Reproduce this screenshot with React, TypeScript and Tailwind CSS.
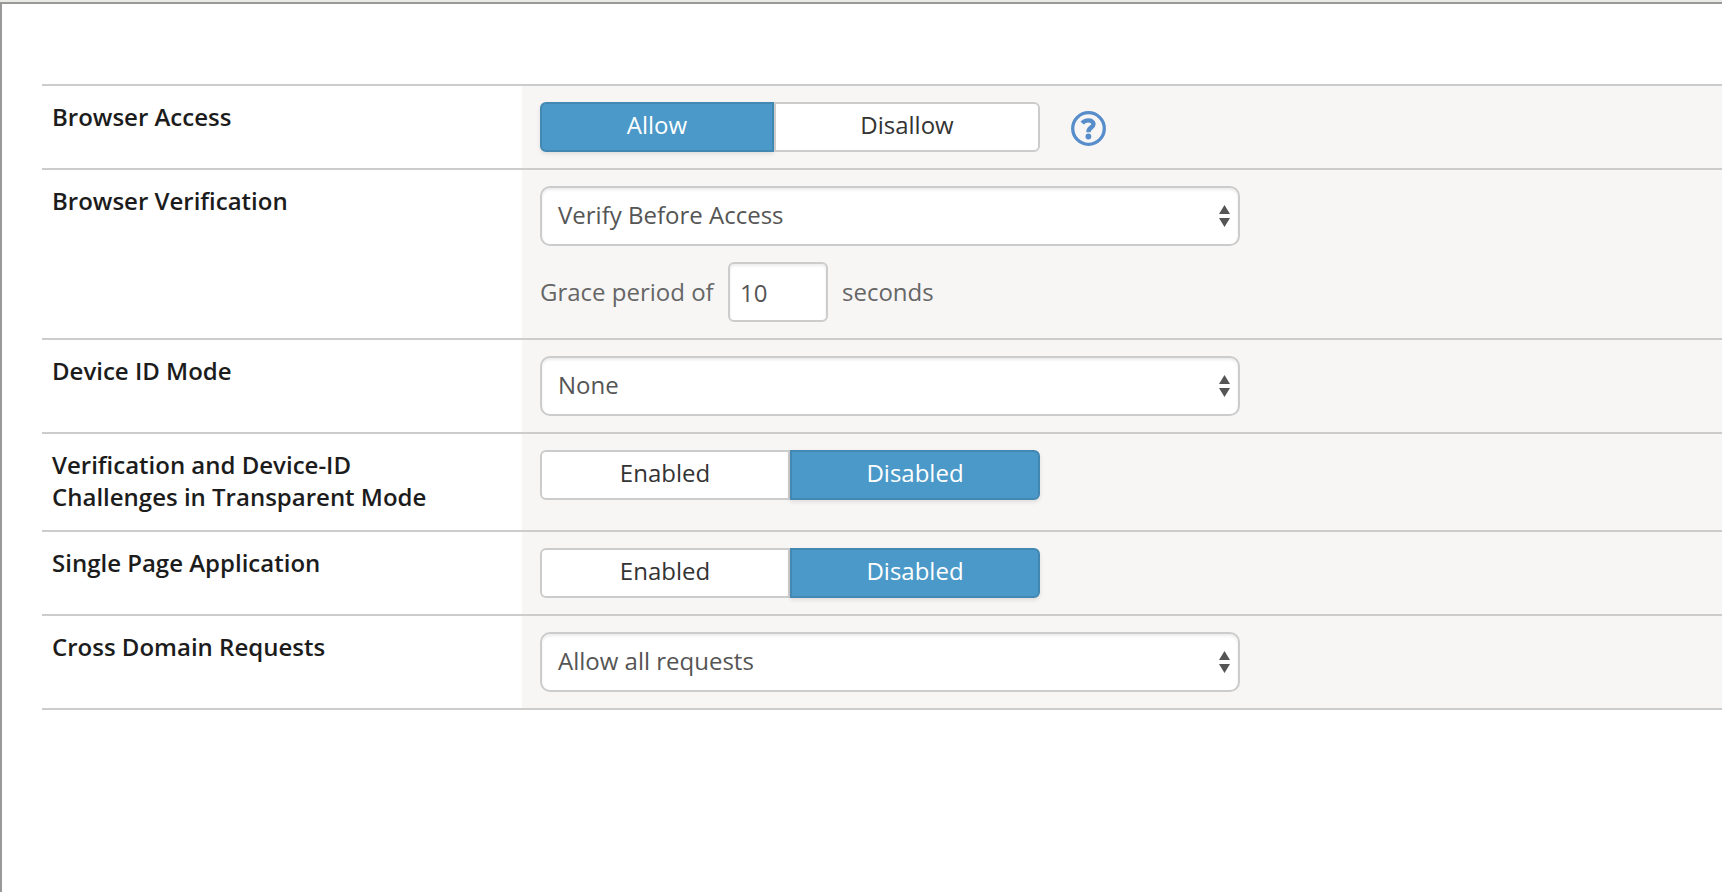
import type { ReactNode } from "react";

function Row({ label, children }: { label: ReactNode; children: ReactNode }) {
  return (
    <div className="flex border-t-2 border-[#ccc]">
      <div className="w-[480px] shrink-0 px-[10px] pt-[15px] pb-[17px] text-[24px] leading-8 font-semibold text-[#1c1c1c]">
        {label}
      </div>
      <div className="flex flex-1 flex-col gap-4 bg-[#f7f6f5] px-[18px] py-4">{children}</div>
    </div>
  );
}

const base = "flex h-[50px] justify-center border-2 pt-[4px] text-[24px] leading-[33px]";
const on = "border-[#4388b3] bg-[#4b99c8] text-white shadow-[0_2px_4px_rgba(0,0,0,0.1)]";
const off = "border-[#ccc] bg-white text-[#333]";

function Toggle({ left, right, active, split }: { left: string; right: string; active: "left" | "right"; split: string }) {
  const l = active === "left";
  return (
    <div className="flex w-[500px]">
      <button className={`${base} ${split} rounded-l-[6px] ${l ? on : off}`}>{left}</button>
      <button className={`${base} flex-1 rounded-r-[6px] ${l ? off : on}`}>{right}</button>
    </div>
  );
}

function Select({ value }: { value: string }) {
  return (
    <div className="flex h-[60px] w-[700px] items-center justify-between rounded-[10px] border-2 border-[#ccc] bg-white pr-[8px] pl-4 text-[24px] text-[#555] shadow-[inset_0_2px_3px_rgba(0,0,0,0.08)]">
      <span className="pb-[2px] leading-8">{value}</span>
      <svg width="11" height="22" viewBox="0 0 11 22" fill="#555">
        <path d="M5.5 0L11 9H0ZM0 13H11L5.5 22Z" />
      </svg>
    </div>
  );
}

export default function App() {
  return (
    <div className="h-[892px] w-full overflow-hidden bg-[#e9e9e6] pt-[2px] font-['Open_Sans','Noto_Sans',sans-serif]">
      <div className="h-full border-t-2 border-l-2 border-[#999] bg-white pt-20 pl-10">
        <div className="border-b-2 border-[#ccc]">
          <Row label="Browser Access">
            <div className="flex">
              <Toggle left="Allow" right="Disallow" active="left" split="w-[234px]" />
              <svg className="mt-[9px] ml-[31px]" width="35" height="35" viewBox="0 0 35 35" fill="none">
                <circle cx="17.5" cy="17.5" r="15.8" stroke="#568dca" strokeWidth="3.3" />
                <path d="M11.2 12.2C12.8 10.2 14.8 9.4 17.4 9.4C20.4 9.4 22.5 10.9 22.5 13.1C22.5 16.7 17.4 16.2 17.4 21.2" stroke="#568dca" strokeWidth="4.4" />
                <circle cx="17.4" cy="25.5" r="2.9" fill="#568dca" />
              </svg>
            </div>
          </Row>
          <Row label="Browser Verification">
            <Select value="Verify Before Access" />
            <div className="flex h-[60px] text-[24px] leading-[60px] text-[#666]">
              <span className="w-[188px]">Grace period of</span>
              <span className="h-[60px] w-[100px] rounded-[6px] border-2 border-[#ccc] bg-white pl-[10px] leading-[58px] text-[#555] shadow-[inset_0_2px_3px_rgba(0,0,0,0.08)]">10</span>
              <span className="ml-[14px]">seconds</span>
            </div>
          </Row>
          <Row label="Device ID Mode">
            <Select value="None" />
          </Row>
          <Row label={<>Verification and Device-ID<br />Challenges in Transparent Mode</>}>
            <Toggle left="Enabled" right="Disabled" active="right" split="w-[250px]" />
          </Row>
          <Row label="Single Page Application">
            <Toggle left="Enabled" right="Disabled" active="right" split="w-[250px]" />
          </Row>
          <Row label="Cross Domain Requests">
            <Select value="Allow all requests" />
          </Row>
        </div>
      </div>
    </div>
  );
}
